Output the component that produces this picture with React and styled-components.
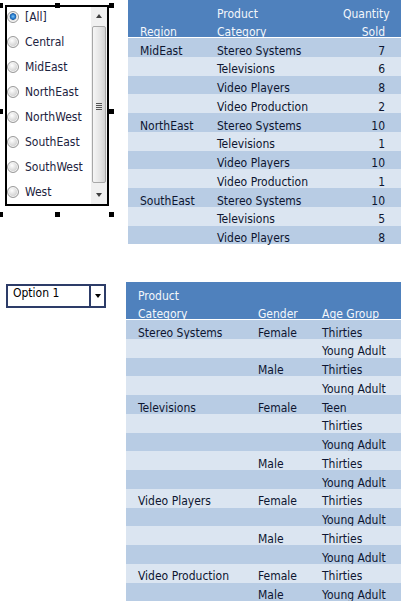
import React from 'react';
import styled, { createGlobalStyle } from 'styled-components';

const GlobalStyle = createGlobalStyle`
  html, body {
    margin: 0;
    padding: 0;
    background: #fff;
    overflow: hidden;
  }
  body {
    font-family: "DejaVu Sans Condensed", "DejaVu Sans", sans-serif;
    font-size: 12px;
  }
`;

const Page = styled.div`
  display: flex;
  flex-direction: column;
  width: 401px;
`;

const Section = styled.div`
  display: flex;
  align-items: flex-start;
  margin-top: ${p => p.$top || 0}px;
`;

const SideCol = styled.div`
  flex: none;
  width: ${p => p.$width}px;
`;

/* ---------- listbox in design mode ---------- */

const SelectFrame = styled.div`
  position: relative;
  width: 114px;
  height: 212px;
`;

const Handle = styled.span`
  position: absolute;
  width: 5px;
  height: 5px;
  background: #000;
  left: ${p => p.$x}px;
  top: ${p => p.$y}px;
`;

const ListBox = styled.div`
  margin: 5px 0 0 5px;
  width: 104px;
  height: 201px;
  box-sizing: border-box;
  border: 2px solid #000;
  background: #fff;
  display: flex;
`;

const Options = styled.div`
  flex: 1;
  display: flex;
  flex-direction: column;
  gap: 7px;
  padding-top: 0.5px;
`;

const Option = styled.label`
  display: flex;
  align-items: center;
  gap: 6px;
  height: 18px;
  color: #1c2340;
  white-space: nowrap;
`;

const Radio = styled.span`
  flex: none;
  width: 12px;
  height: 12px;
  box-sizing: border-box;
  border-radius: 50%;
  border: 1px solid #9a9a9a;
  background: ${p =>
    p.$checked
      ? 'radial-gradient(circle at 50% 45%, #7fc4f5 0, #2a7fd0 2px, #1b5fa8 3px, #d8d8d8 3.6px, #f4f4f4 5px)'
      : 'radial-gradient(circle at 40% 35%, #ffffff 0, #efefef 2px, #d4d4d4 5.5px)'};
  box-shadow: inset 0 0 0 1px #f6f6f6;
`;

const ScrollBar = styled.div`
  flex: none;
  width: 16px;
  display: flex;
  flex-direction: column;
  background: #f0f0f0;
`;

const ArrowBtn = styled.div`
  flex: none;
  height: ${p => p.$h}px;
  display: flex;
  align-items: center;
  justify-content: center;
  &::after {
    content: '';
    border-left: 3.5px solid transparent;
    border-right: 3.5px solid transparent;
    ${p => (p.$down ? 'border-top' : 'border-bottom')}: 4px solid #404040;
  }
`;

const Thumb = styled.div`
  flex: 1;
  margin: 1px 1px 2px;
  border: 1px solid #a8a8a8;
  border-radius: 2px;
  background: linear-gradient(to right, #f6f6f6, #e4e4e4 60%, #d2d2d2);
  display: flex;
  align-items: center;
  justify-content: center;
  padding-top: 3px;
`;

const Grip = styled.div`
  width: 6px;
  height: 7px;
  background: repeating-linear-gradient(to bottom, #555 0 1px, transparent 1px 2px);
`;

/* ---------- dropdown ---------- */

const Select = styled.div`
  margin: 2px 0 0 6px;
  width: 100px;
  height: 24px;
  box-sizing: border-box;
  border: 2px solid #2d3c68;
  display: flex;
  align-items: stretch;
  background: #fff;
`;

const SelectValue = styled.div`
  flex: 1;
  padding-left: 5px;
  line-height: 15px;
  color: #000;
`;

const SelectButton = styled.div`
  flex: none;
  width: 13px;
  border-left: 2px solid #2d3c68;
  display: flex;
  align-items: center;
  justify-content: center;
  &::after {
    content: '';
    border-left: 3.5px solid transparent;
    border-right: 3.5px solid transparent;
    border-top: 4px solid #000;
  }
`;

/* ---------- report tables ---------- */

const Table = styled.div`
  flex: 1;
  display: flex;
  flex-direction: column;
  min-width: 0;
`;

const HeadRow = styled.div`
  display: grid;
  grid-template-columns: ${p => p.$cols};
  height: 37px;
  background: #4f81bd;
  border-bottom: 1px solid #fff;
  color: #f4f7fb;
  overflow: hidden;
`;

const HeadCell = styled.div`
  padding: ${p => (p.$single ? 23.25 : 4.5)}px ${p => (p.$right ? 16 : 12)}px 0 12px;
  line-height: 18.75px;
  text-align: ${p => (p.$right ? 'right' : 'left')};
  white-space: nowrap;
`;

const Row = styled.div`
  display: grid;
  grid-template-columns: ${p => p.$cols};
  height: 18.75px;
  background: ${p => (p.$alt ? '#dbe5f1' : '#b8cce4')};
  color: #0d1530;
`;

const Cell = styled.div`
  padding: 3.5px ${p => (p.$right ? 16 : 12)}px 0 12px;
  line-height: 18.75px;
  text-align: ${p => (p.$right ? 'right' : 'left')};
  white-space: nowrap;
`;

const regions = ['[All]', 'Central', 'MidEast', 'NorthEast', 'NorthWest', 'SouthEast', 'SouthWest', 'West'];

const sales = [
  ['MidEast', 'Stereo Systems', 7],
  ['', 'Televisions', 6],
  ['', 'Video Players', 8],
  ['', 'Video Production', 2],
  ['NorthEast', 'Stereo Systems', 10],
  ['', 'Televisions', 1],
  ['', 'Video Players', 10],
  ['', 'Video Production', 1],
  ['SouthEast', 'Stereo Systems', 10],
  ['', 'Televisions', 5],
  ['', 'Video Players', 8],
];

const demographics = [
  ['Stereo Systems', 'Female', 'Thirties'],
  ['', '', 'Young Adult'],
  ['', 'Male', 'Thirties'],
  ['', '', 'Young Adult'],
  ['Televisions', 'Female', 'Teen'],
  ['', '', 'Thirties'],
  ['', '', 'Young Adult'],
  ['', 'Male', 'Thirties'],
  ['', '', 'Young Adult'],
  ['Video Players', 'Female', 'Thirties'],
  ['', '', 'Young Adult'],
  ['', 'Male', 'Thirties'],
  ['', '', 'Young Adult'],
  ['Video Production', 'Female', 'Thirties'],
  ['', 'Male', 'Young Adult'],
];

const handles = [
  [-2, -2], [55, -2], [109, -2],
  [-2, 104], [109, 104],
  [-2, 207], [55, 207], [109, 207],
];

const salesCols = '77px 1fr 70px';
const demoCols = '120px 64px 1fr';

const App = () => {
  return (
    <Page>
      <GlobalStyle />
      <Section>
        <SideCol $width={128}>
          <SelectFrame>
            <ListBox>
              <Options>
                {regions.map((r, i) => (
                  <Option key={r}>
                    <Radio $checked={i === 0} />
                    {r}
                  </Option>
                ))}
              </Options>
              <ScrollBar>
                <ArrowBtn $h={18} />
                <Thumb>
                  <Grip />
                </Thumb>
                <ArrowBtn $h={19} $down />
              </ScrollBar>
            </ListBox>
            {handles.map(([x, y]) => (
              <Handle key={`${x}-${y}`} $x={x} $y={y} />
            ))}
          </SelectFrame>
        </SideCol>
        <Table>
          <HeadRow $cols={salesCols}>
            <HeadCell $single>Region</HeadCell>
            <HeadCell>Product<br />Category</HeadCell>
            <HeadCell $right>Quantity<br />Sold</HeadCell>
          </HeadRow>
          {sales.map(([region, product, qty], i) => (
            <Row key={i} $cols={salesCols} $alt={i % 2 === 1}>
              <Cell>{region}</Cell>
              <Cell>{product}</Cell>
              <Cell $right>{qty}</Cell>
            </Row>
          ))}
        </Table>
      </Section>

      <Section $top={37.75}>
        <SideCol $width={126}>
          <Select>
            <SelectValue>Option 1</SelectValue>
            <SelectButton />
          </Select>
        </SideCol>
        <Table>
          <HeadRow $cols={demoCols}>
            <HeadCell>Product<br />Category</HeadCell>
            <HeadCell $single>Gender</HeadCell>
            <HeadCell $single>Age Group</HeadCell>
          </HeadRow>
          {demographics.map(([product, gender, age], i) => (
            <Row key={i} $cols={demoCols} $alt={i % 2 === 1}>
              <Cell>{product}</Cell>
              <Cell>{gender}</Cell>
              <Cell>{age}</Cell>
            </Row>
          ))}
        </Table>
      </Section>
    </Page>
  );
};

export default App;
